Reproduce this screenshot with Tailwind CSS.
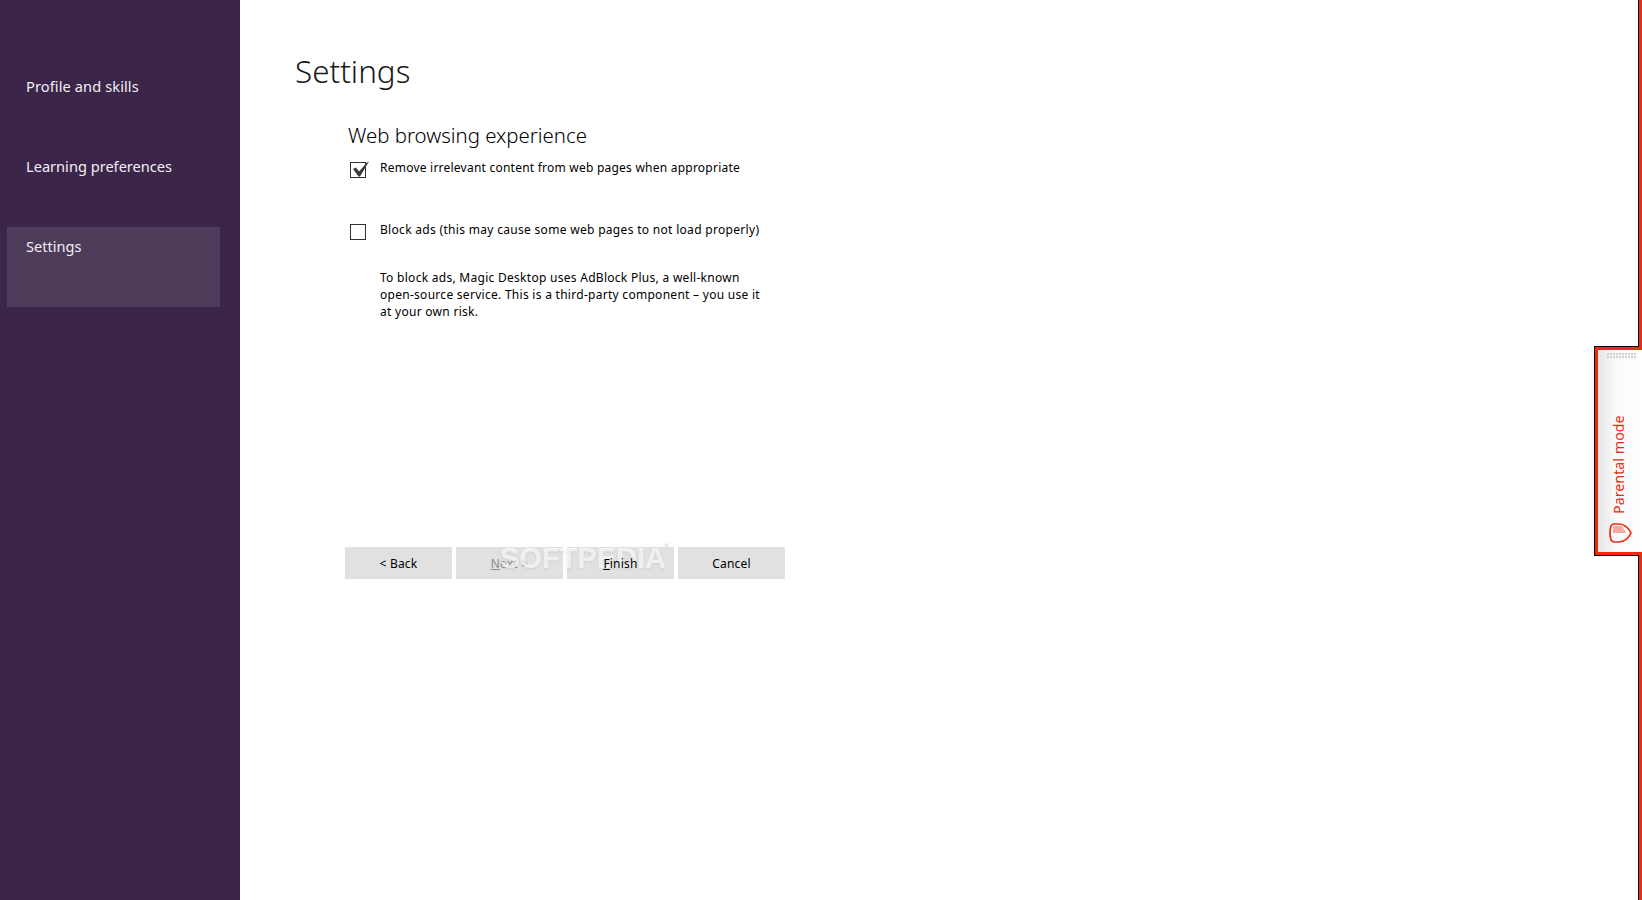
<!DOCTYPE html>
<html lang="en">
<head>
  <meta charset="UTF-8" />
  <title>Settings</title>
  <script src="https://cdn.jsdelivr.net/npm/@tailwindcss/browser@4"></script>
</head>
<body class="bg-white text-black font-['Noto_Sans',sans-serif]">
  <div class="relative flex h-[900px] w-[1642px] overflow-hidden">

    <!-- Sidebar -->
    <aside class="w-[240px] shrink-0 bg-[#3b2649] pl-[7px] pt-[67px] text-[14.6px] text-[#f1eef3]">
      <div class="h-[80px] w-[213px] pl-[19px] pt-[9px] tracking-[0.1px]">Profile and skills</div>
      <div class="h-[80px] w-[213px] pl-[19px] pt-[9px]">Learning preferences</div>
      <div class="h-[80px] w-[213px] bg-[#4e3c5b] pl-[19px] pt-[9px]">Settings</div>
    </aside>

    <!-- Content -->
    <main class="flex-1 pl-[55px] pt-[46px]">
      <h1 class="text-[31.4px] leading-[50px] font-light text-[#1a1a1a]">Settings</h1>
      <div class="w-[460px] pl-[53px] pt-[24px]">
        <h2 class="text-[20.4px] leading-[30px] font-light">Web browsing experience</h2>
        <label class="mt-[7px] flex h-[62px] items-start text-[12px] leading-[17px] tracking-[0.23px]">
          <span class="relative ml-[2px] mt-[5px] h-[16px] w-[16px] shrink-0 border border-[#333]">
            <svg class="absolute left-[-1px] top-[-1px] h-[16px] w-[16px] overflow-visible" viewBox="0 0 16 16"><path d="M3 7L6 5.500L9 9.500L16.500 1L19 -0.500L10 14.500H8.500Z" fill="#3a3a3a"/></svg>
          </span>
          <span class="ml-[14px] mt-[2px] whitespace-nowrap">Remove irrelevant content from web pages when appropriate</span>
        </label>
        <label class="flex items-start text-[12px] leading-[17px] tracking-[0.31px]">
          <span class="ml-[2px] mt-[5px] h-[16px] w-[16px] shrink-0 border border-[#333]"></span>
          <span class="ml-[14px] mt-[2px] whitespace-nowrap">Block ads (this may cause some web pages to not load properly)</span>
        </label>
        <p class="mt-[29px] ml-[32px] whitespace-nowrap text-[12px] leading-[17px] tracking-[0.28px]">To block ads, Magic Desktop uses AdBlock Plus, a well-known<br />open-source service. This is a third-party component – you use it<br />at your own risk.</p>
      </div>
      <div class="mt-[227px] ml-[50px] flex gap-[4px] text-[12px] tracking-[0.2px]">
        <button class="h-[32px] w-[107px] bg-[#e1e1e1] pt-[2px]">&lt; Back</button>
        <button class="h-[32px] w-[107px] bg-[#e1e1e1] pt-[2px] text-[#8a8a8a]"><span class="underline">N</span>ext &gt;</button>
        <button class="h-[32px] w-[107px] bg-[#e1e1e1] pt-[2px]"><span class="relative z-10"><span class="underline">F</span>inish</span></button>
        <button class="h-[32px] w-[107px] bg-[#e1e1e1] pt-[2px]">Cancel</button>
      </div>
    </main>

    <!-- Watermark -->
    <div class="absolute left-[500px] top-[541px] font-['Liberation_Sans',sans-serif] text-[29px] leading-[34px] font-bold text-white/65 [text-shadow:0_1px_3px_rgba(0,0,0,0.08)]">SOFTPEDIA</div>
    <div class="absolute left-[664px] top-[543px] text-[6px] leading-[6px] text-[#d8d8d8]">®</div>

    <!-- Parental mode frame -->
    <div class="absolute right-0 top-0 h-[900px] w-[4px] border-l border-black bg-[#f02a0c]"></div>
    <div class="absolute left-[1594px] top-[346px] h-[210px] w-[48px] border border-r-0 border-black bg-[#f02a0c] pl-[3px] py-[3px]">
      <div class="relative h-[202px] w-[44px] bg-gradient-to-r from-[#e6e6e6] via-[#fafafa] via-40% to-white">
        <svg class="absolute left-[9px] top-[3px] h-[6px] w-[30px]" viewBox="0 0 30 6">
          <defs><pattern id="grip" width="3" height="3" patternUnits="userSpaceOnUse"><rect width="2" height="2" fill="#cfcfcf"/></pattern></defs>
          <rect width="30" height="6" fill="url(#grip)"/>
        </svg>
        <div class="absolute bottom-[38px] left-[14px] origin-bottom-left translate-x-[14px] -rotate-90 whitespace-nowrap text-[14.300px] leading-[14px] text-[#f02a0c]">Parental mode</div>
        <svg class="absolute bottom-[9px] left-[11px] h-[20px] w-[23px] overflow-visible" viewBox="0 0 23 20">
          <path d="M4 3h9l4 7H4z" fill="#f5aaa0"/>
          <path d="M5 1h5c5 0 10 4 12 9-2 5-7 9-12 9H5c-3 0-4-4-4-9s1-9 4-9z" fill="none" stroke="#f02a0c" stroke-width="1.700"/>
        </svg>
      </div>
    </div>
    <!-- Black top and bottom lines stop at the frame's own black line -->
    <div class="absolute left-[1639px] top-[346px] h-[1px] w-[3px] bg-[#f02a0c]"></div>
    <div class="absolute left-[1639px] top-[555px] h-[1px] w-[3px] bg-[#f02a0c]"></div>
  </div>
</body>
</html>
